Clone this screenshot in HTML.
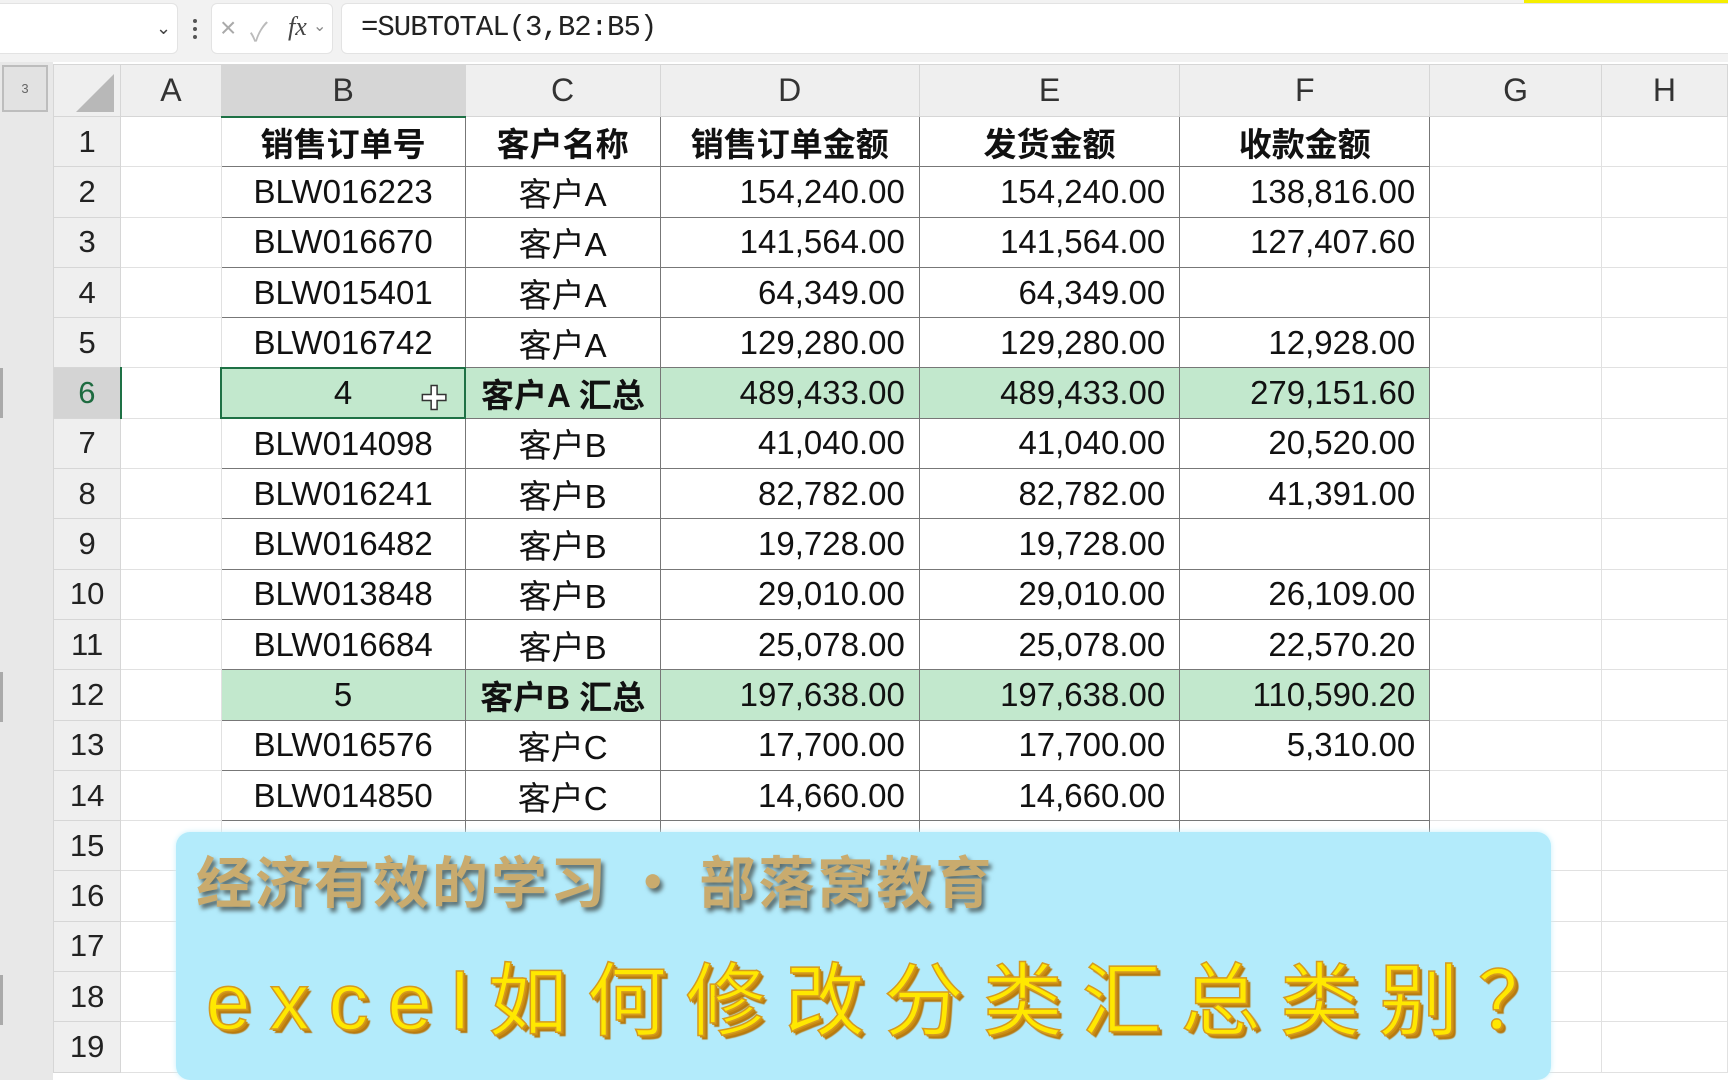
<!DOCTYPE html>
<html><head><meta charset="utf-8">
<style>
*{margin:0;padding:0;box-sizing:border-box}
body{width:1728px;height:1080px;overflow:hidden;background:#fff;position:relative;font-family:"Liberation Sans","Noto Sans CJK SC",sans-serif}
.top{position:absolute;left:0;top:0;width:1728px;height:62px;background:#f2f2f2}
.box{position:absolute;background:#fff;border-radius:6px;border:1px solid #e3e3e3}
.outline{position:absolute;left:0;top:62px;width:53px;height:1018px;background:#e8e8e8}
table{position:absolute;left:53px;top:64px;border-collapse:collapse;table-layout:fixed}
td{height:50.3px;font-size:33px;color:#111;white-space:nowrap;overflow:hidden;border:1px solid #e1e1e1;padding:0 14px;font-family:"Liberation Sans","Noto Sans CJK SC",sans-serif}
tr.h td{height:52px;background:#efefef;color:#333;font-size:32px;text-align:center;border-color:#d6d6d6}
td.rh{background:#efefef;color:#222;text-align:center;font-size:31px;border-color:#d6d6d6;padding:0}
td.d{border:1px solid #777}
.c{text-align:center}.r{text-align:right}
.b{font-weight:bold}
tr.g td.d{background:#c2e8cd}
</style></head><body>
<div class="top"></div>
<div style="position:absolute;left:1524px;top:0;width:204px;height:6px;background:#f5ee00"></div>
<div class="box" style="left:-6px;top:3px;width:184px;height:51px"></div>
<div style="position:absolute;left:156px;top:18px;font-size:18px;color:#444">&#8964;</div>
<div style="position:absolute;left:193px;top:19px;width:4px;height:20px;border-left:4px dotted #555"></div>
<div class="box" style="left:211px;top:3px;width:122px;height:51px"></div>
<div style="position:absolute;left:220px;top:12px;font-size:28px;color:#aaa">×</div>
<div style="position:absolute;left:250px;top:12px;font-size:26px;color:#bbb">✓</div>
<div style="position:absolute;left:288px;top:12px;font-size:26px;color:#444;font-style:italic;font-family:'Liberation Serif',serif">fx</div>
<div style="position:absolute;left:313px;top:16px;font-size:16px;color:#888">&#8964;</div>
<div class="box" style="left:341px;top:3px;width:1400px;height:51px"></div>
<div style="position:absolute;left:361px;top:11px;font-size:29px;color:#222;font-family:'Liberation Mono','Noto Sans CJK SC',monospace;letter-spacing:-1px">=SUBTOTAL(3,B2:B5)</div>
<div class="outline"></div>
<div style="position:absolute;left:2px;top:65px;width:46px;height:47px;background:#e2e2e2;border:2px solid #bdbdbd;font-size:13px;color:#666;text-align:center;line-height:43px">3</div>
<div style="position:absolute;left:0;top:368px;width:3px;height:50px;background:#aaa"></div>
<div style="position:absolute;left:0;top:672px;width:3px;height:50px;background:#aaa"></div>
<div style="position:absolute;left:0;top:975px;width:3px;height:50px;background:#aaa"></div>
<table>
<colgroup><col style="width:69px"><col style="width:103px"><col style="width:246px"><col style="width:195px"><col style="width:261px"><col style="width:264px"><col style="width:253px"><col style="width:178px"><col style="width:130px"></colgroup>
<tr class="h"><td style="position:relative"><div style="position:absolute;right:6px;bottom:4px;width:0;height:0;border-left:38px solid transparent;border-bottom:38px solid #b8b8b8"></div></td><td>A</td><td style="background:#d6d6d6;border-bottom:2px solid #1e7145">B</td><td>C</td><td>D</td><td>E</td><td>F</td><td>G</td><td>H</td></tr>
<tr><td class="rh">1</td><td></td><td class="d c b">销售订单号</td><td class="d c b">客户名称</td><td class="d c b">销售订单金额</td><td class="d c b">发货金额</td><td class="d c b">收款金额</td><td></td><td></td></tr>
<tr><td class="rh">2</td><td></td><td class="d c">BLW016223</td><td class="d c">客户A</td><td class="d r">154,240.00</td><td class="d r">154,240.00</td><td class="d r">138,816.00</td><td></td><td></td></tr>
<tr><td class="rh">3</td><td></td><td class="d c">BLW016670</td><td class="d c">客户A</td><td class="d r">141,564.00</td><td class="d r">141,564.00</td><td class="d r">127,407.60</td><td></td><td></td></tr>
<tr><td class="rh">4</td><td></td><td class="d c">BLW015401</td><td class="d c">客户A</td><td class="d r">64,349.00</td><td class="d r">64,349.00</td><td class="d r"></td><td></td><td></td></tr>
<tr><td class="rh">5</td><td></td><td class="d c">BLW016742</td><td class="d c">客户A</td><td class="d r">129,280.00</td><td class="d r">129,280.00</td><td class="d r">12,928.00</td><td></td><td></td></tr>
<tr class="g"><td class="rh" style="background:#d4d4d4;color:#1e6b40;border-right:2px solid #1e7145">6</td><td></td><td class="d c" style="border:2px solid #1e7145;position:relative">4<span style="position:absolute;right:16px;top:8px;font-size:28px;color:#fff;-webkit-text-stroke:1.5px #333;font-weight:bold">✚</span></td><td class="d c b">客户A 汇总</td><td class="d r">489,433.00</td><td class="d r">489,433.00</td><td class="d r">279,151.60</td><td></td><td></td></tr>
<tr><td class="rh">7</td><td></td><td class="d c">BLW014098</td><td class="d c">客户B</td><td class="d r">41,040.00</td><td class="d r">41,040.00</td><td class="d r">20,520.00</td><td></td><td></td></tr>
<tr><td class="rh">8</td><td></td><td class="d c">BLW016241</td><td class="d c">客户B</td><td class="d r">82,782.00</td><td class="d r">82,782.00</td><td class="d r">41,391.00</td><td></td><td></td></tr>
<tr><td class="rh">9</td><td></td><td class="d c">BLW016482</td><td class="d c">客户B</td><td class="d r">19,728.00</td><td class="d r">19,728.00</td><td class="d r"></td><td></td><td></td></tr>
<tr><td class="rh">10</td><td></td><td class="d c">BLW013848</td><td class="d c">客户B</td><td class="d r">29,010.00</td><td class="d r">29,010.00</td><td class="d r">26,109.00</td><td></td><td></td></tr>
<tr><td class="rh">11</td><td></td><td class="d c">BLW016684</td><td class="d c">客户B</td><td class="d r">25,078.00</td><td class="d r">25,078.00</td><td class="d r">22,570.20</td><td></td><td></td></tr>
<tr class="g"><td class="rh">12</td><td></td><td class="d c">5</td><td class="d c b">客户B 汇总</td><td class="d r">197,638.00</td><td class="d r">197,638.00</td><td class="d r">110,590.20</td><td></td><td></td></tr>
<tr><td class="rh">13</td><td></td><td class="d c">BLW016576</td><td class="d c">客户C</td><td class="d r">17,700.00</td><td class="d r">17,700.00</td><td class="d r">5,310.00</td><td></td><td></td></tr>
<tr><td class="rh">14</td><td></td><td class="d c">BLW014850</td><td class="d c">客户C</td><td class="d r">14,660.00</td><td class="d r">14,660.00</td><td class="d r"></td><td></td><td></td></tr>
<tr><td class="rh">15</td><td></td><td class="d c" style="color:#ccc">BLW015057</td><td class="d c" style="color:#ccc">客户C</td><td class="d r" style="color:#ccc">5,050.00</td><td class="d r" style="color:#ccc">5,050.00</td><td class="d r" style="color:#ccc">5,255.00</td><td></td><td></td></tr>
<tr><td class="rh">16</td><td></td><td></td><td></td><td></td><td></td><td></td><td></td><td></td></tr>
<tr><td class="rh">17</td><td></td><td></td><td></td><td></td><td></td><td></td><td></td><td></td></tr>
<tr><td class="rh">18</td><td></td><td></td><td></td><td></td><td></td><td></td><td></td><td></td></tr>
<tr><td class="rh">19</td><td></td><td></td><td></td><td></td><td></td><td></td><td></td><td></td></tr>
</table>
<div style="position:absolute;left:176px;top:832px;width:1375px;height:248px;background:#b3ebfb;border-radius:14px;box-shadow:0 0 6px #c8f0fb"></div>
<div style="position:absolute;left:196px;top:848px;font-size:56px;font-weight:bold;color:#c9ab6e;text-shadow:3px 4px 4px #5a6e70;font-family:'Noto Sans CJK SC',sans-serif;letter-spacing:3px;line-height:64px">经济有效的学习 · 部落窝教育</div>
<div style="position:absolute;left:206px;top:952px;font-size:80px;font-weight:normal;color:#ffe800;text-shadow:2px 2px 0 #c98a10,4px 4px 1px #b77a10;-webkit-text-stroke:1.5px #d59a20;font-family:'Liberation Sans','Noto Sans CJK SC',sans-serif;letter-spacing:19px;line-height:100px">excel如何修改分类汇总类别？</div>
</body></html>
